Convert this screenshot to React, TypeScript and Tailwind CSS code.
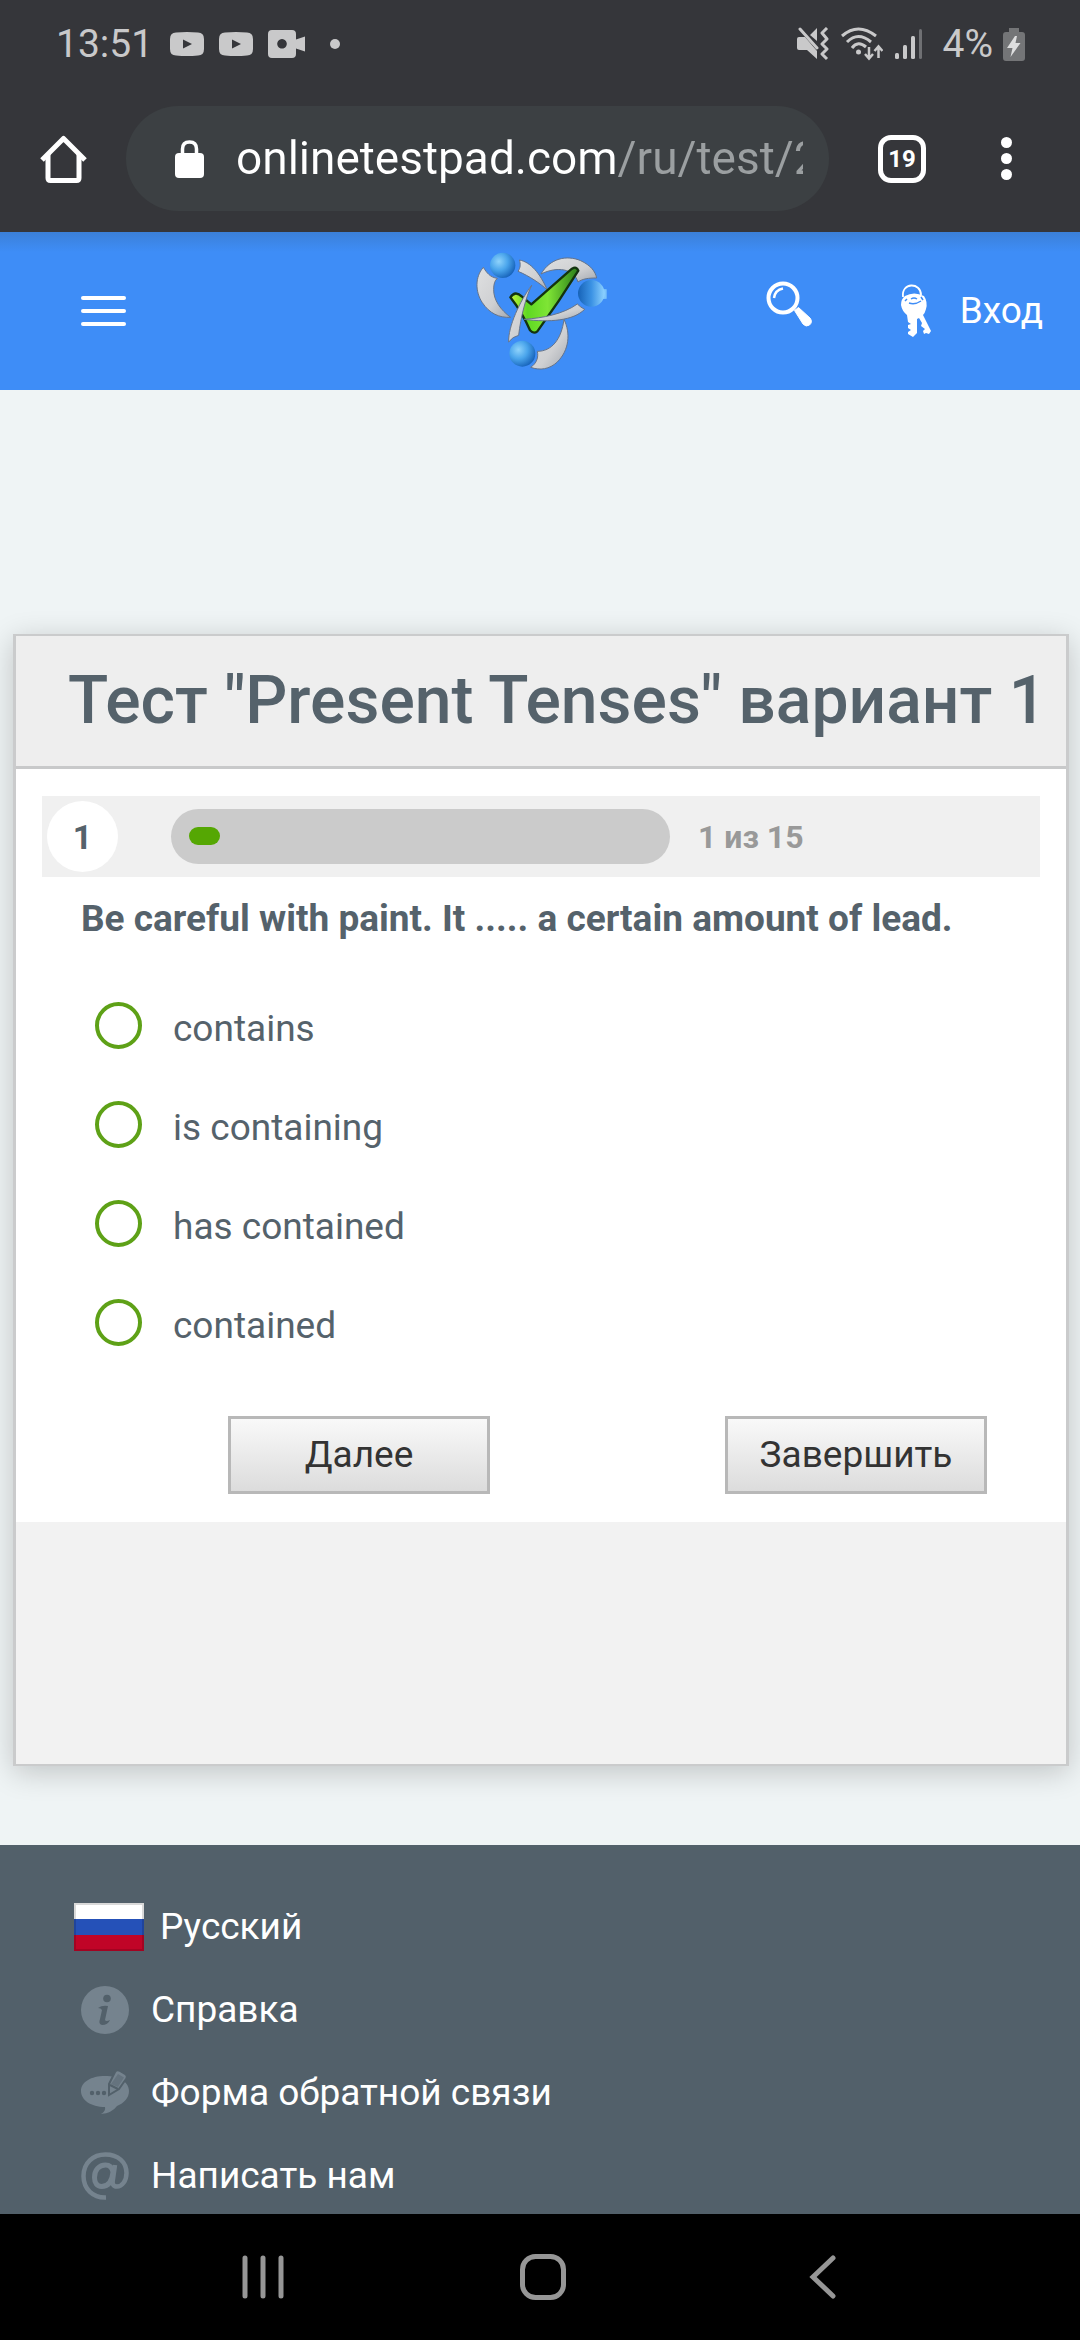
import { useState } from 'react';

const answers = ['contains', 'is containing', 'has contained', 'contained'];
const current = 1;
const total = 15;

function YoutubeIcon() {
  return (
    <svg width="34" height="24" viewBox="0 0 34 24" className="shrink-0">
      <path
        fill="currentColor"
        fillRule="evenodd"
        d="M6 0.5 Q17 -0.5 28 0.5 Q34 0.5 34 7 V17 Q34 23.500 28 23.500 Q17 24.500 6 23.500 Q0 23.500 0 17 V7 Q0 0.500 6 0.500 Z M13 7.500 V16.500 L22 12 Z"
      />
    </svg>
  );
}

function StatusBar() {
  return (
    <div className="flex h-[88px] items-center pl-14 pr-[55px] text-[#c9c9ca]">
      <span className="text-[39px] leading-[48px]">13:51</span>
      <div className="ml-[17px] flex items-center gap-[15px]">
        <YoutubeIcon />
        <YoutubeIcon />
        <svg width="38" height="28" viewBox="0 0 38 28">
          <path
            fill="currentColor"
            fillRule="evenodd"
            d="M4 0 H24 Q28 0 28 4 V9.500 L37 6.500 V21.500 L28 18.500 V24 Q28 28 24 28 H4 Q0 28 0 24 V4 Q0 0 4 0 Z M14 9 a4.800 4.800 0 1 0 0.010 0 Z"
          />
        </svg>
      </div>
      <span className="ml-6 size-[10px] rounded-full bg-[#c9c9ca]" />

      <div className="ml-auto flex items-center">
        <svg width="32" height="34" viewBox="0 0 32 34">
          <path fill="currentColor" d="M0 12 Q0 10 2 10 H8 L20 24 V32 L10 23 H2 Q0 23 0 21 Z M13 8 L20 1 V14 Z" />
          <path d="M3 2 L20 21" stroke="currentColor" strokeWidth="3" strokeLinecap="round" />
          <path
            d="M30 1 L25 6 L30 12 L25 17 L30 22 L25 27 L30 32"
            fill="none"
            stroke="currentColor"
            strokeWidth="3"
            strokeLinejoin="round"
          />
        </svg>
        <svg width="42" height="34" viewBox="0 0 42 34" className="ml-3" fill="none" stroke="currentColor">
          <g strokeWidth="3">
            <path d="M1 9 Q17 -5 35 9" />
            <path d="M6 15 Q17 4 30 15" />
            <path d="M11 21 Q17 13 25 20" />
          </g>
          <circle cx="17.500" cy="25" r="2.500" fill="currentColor" stroke="none" />
          <path d="M28 20 V31 M24 27 L28 31.500 L32 27 M37.500 31 V20 M33.500 24 L37.500 19.500 L41.500 24" strokeWidth="2.500" />
        </svg>
        <svg width="28" height="32" viewBox="0 0 28 32" className="ml-3" fill="currentColor">
          <rect x="0" y="25" width="4" height="6" rx="1.500" />
          <rect x="8" y="17" width="4" height="14" rx="1.500" />
          <rect x="16" y="8" width="4" height="23" rx="1.500" />
          <rect x="24" y="1" width="3" height="30" rx="1.500" opacity="0.400" />
        </svg>
        <span className="ml-5 text-[39px] leading-[48px]">4%</span>
        <svg width="22" height="34" viewBox="0 0 22 34" className="ml-[10px]">
          <path fill="#747577" d="M6 5 V1 H16 V5 H19 Q22 5 22 8 V31 Q22 34 19 34 H3 Q0 34 0 31 V8 Q0 5 3 5 Z" />
          <path fill="#dededf" d="M12 9 L4 21 H9.500 L7.500 30 L17.500 16 H12.500 L14 9 Z" />
        </svg>
      </div>
    </div>
  );
}

function Toolbar() {
  return (
    <div className="flex items-center pb-[21px] pl-10 pr-[68px] pt-[18px] text-white">
      <button aria-label="Home" className="shrink-0">
        <svg width="47" height="48" viewBox="0 0 47 48" fill="none" stroke="currentColor" strokeWidth="5">
          <path d="M2 25 L23.500 3.500 L45 25" strokeLinejoin="round" />
          <path d="M8 19 V43 Q8 45.500 10.500 45.500 H36.500 Q39 45.500 39 43 V19" />
        </svg>
      </button>
      <div className="ml-[39px] flex h-[105px] min-w-0 flex-1 items-center rounded-full bg-[#3c4043] pl-[49px] pr-[26px]">
        <svg width="29" height="38" viewBox="0 0 29 38" className="shrink-0">
          <rect x="0" y="13" width="29" height="25" rx="4" fill="currentColor" />
          <path d="M7.500 14 V9 Q7.500 2 14.500 2 Q21.500 2 21.500 9 V14" fill="none" stroke="currentColor" strokeWidth="3.500" />
        </svg>
        <input
          type="text"
          aria-label="Address"
          defaultValue="onlinetestpad.com/ru/test/2"
          className="ml-8 h-16 min-w-0 flex-1 bg-[linear-gradient(to_right,#ffffff_379px,#9b9fa1_379px)] bg-clip-text text-[46px] text-transparent outline-none"
        />
      </div>
      <button
        aria-label="Tabs"
        className="ml-[49px] flex size-12 shrink-0 items-center justify-center rounded-[13px] border-5 border-white text-[24px] font-bold leading-none"
      >
        19
      </button>
      <button aria-label="Menu" className="ml-[75px] flex shrink-0 flex-col gap-[5px]">
        <span className="size-[11px] rounded-full bg-white" />
        <span className="size-[11px] rounded-full bg-white" />
        <span className="size-[11px] rounded-full bg-white" />
      </button>
    </div>
  );
}

function Logo() {
  return (
    <svg width="136" height="128" viewBox="96 51 408 384">
      <defs>
        <linearGradient id="silver" x1="0" y1="0" x2="1" y2="1">
          <stop offset="0" stopColor="#dfe0e1" />
          <stop offset="0.600" stopColor="#cfd0d2" />
          <stop offset="1" stopColor="#a3a8b0" />
        </linearGradient>
        <radialGradient id="ball" cx="0.350" cy="0.350" r="0.700">
          <stop offset="0" stopColor="#8fd3fb" />
          <stop offset="0.500" stopColor="#4aa5ec" />
          <stop offset="1" stopColor="#1763ba" />
        </radialGradient>
        <linearGradient id="ballSide" x1="0" y1="0" x2="1" y2="0">
          <stop offset="0" stopColor="#1763b8" />
          <stop offset="0.500" stopColor="#3b92e4" />
          <stop offset="1" stopColor="#8ed2ff" />
        </linearGradient>
        <linearGradient id="tick" x1="0" y1="0" x2="1" y2="0">
          <stop offset="0" stopColor="#c3f53c" />
          <stop offset="0.250" stopColor="#5fd822" />
          <stop offset="0.550" stopColor="#7fe535" />
          <stop offset="1" stopColor="#2a7d1a" />
        </linearGradient>
      </defs>
      <g fill="url(#silver)" stroke="#66748a" strokeWidth="3">
        <path d="M130 112 C105 140 105 185 127 218 C148 250 178 264 212 262 C182 240 160 210 161 178 C161 162 164 152 172 145 C150 142 140 128 130 112 Z" />
        <path d="M238 90 C272 96 300 130 322 180 C300 160 268 138 234 124 C242 112 242 102 238 90 Z" />
        <path d="M303 132 C330 85 380 74 422 92 C452 106 466 124 470 144 C446 144 428 146 414 156 C402 116 352 108 303 132 Z" />
        <path d="M372 268 C392 310 388 360 352 396 C328 418 300 422 272 412 C290 400 296 382 292 364 C334 364 364 330 372 268 Z" />
      </g>
      <path
        d="M211 202 Q226 180 246 200 L274 223 L396 116 Q410 108 415 122 Q358 214 292 304 Q281 313 270 301 Q246 246 211 202 Z"
        fill="url(#tick)"
        stroke="#14330f"
        strokeWidth="7"
        strokeLinejoin="round"
      />
      <g fill="url(#silver)" stroke="#66748a" strokeWidth="3">
        <path d="M434 238 C400 272 330 278 252 268 C310 264 370 252 412 222 Q422 232 434 238 Z" />
        <path d="M275 166 C258 200 242 262 236 316 Q218 320 206 336 C204 290 240 212 275 166 Z" />
      </g>
      <circle cx="188" cy="106" r="38" fill="url(#ball)" />
      <path d="M478 176 L500 178 V206 L478 208 Z" fill="#7cc4fb" />
      <circle cx="454" cy="190" r="40" fill="url(#ballSide)" />
      <circle cx="247" cy="371" r="39" fill="url(#ball)" />
    </svg>
  );
}

function SiteHeader() {
  return (
    <header className="grid h-[158px] grid-cols-[1fr_auto_1fr] items-center bg-[#3e8df7] bg-[linear-gradient(to_bottom,#3b80d8,#3e8df7_20px)] text-white">
      <button aria-label="Меню" className="ml-[81px] flex w-[45px] flex-col gap-[9px]">
        <span className="h-1 w-full rounded-full bg-white" />
        <span className="h-1 w-full rounded-full bg-white" />
        <span className="h-1 w-full rounded-full bg-white" />
      </button>
      <a href="#" aria-label="Online Test Pad">
        <Logo />
      </a>
      <div className="flex items-center justify-end pr-[37px]">
        <button aria-label="Поиск">
          <svg width="46" height="62" viewBox="0 0 46 62" fill="none" stroke="currentColor">
            <circle cx="17" cy="18" r="14.500" strokeWidth="4" />
            <path d="M8 18 Q9 10 17 8.500" strokeWidth="2.500" />
            <path d="M28.500 30.500 L32.500 27.500 L44 38 Q47 42 43.500 45 Q40 47.500 37 44 Z" fill="currentColor" strokeWidth="1" />
          </svg>
        </button>
        <a href="#" className="ml-[89px] flex items-center text-[37px] leading-[44px]">
          <svg width="31" height="56" viewBox="0 0 31 56" className="mr-7">
            <path d="M2 14 C0 -1 20 -1 20 12" fill="none" stroke="currentColor" strokeWidth="1.800" />
            <path
              fill="currentColor"
              d="M4 13 Q13 8 23 13 Q27 19 25 26 Q24 30 22 32 L26 40 L30 48 L28 51 L25 50 L23 51 L22 48 L24 46 L20 43 L21 40 L18 35 L16 36 L16 50 L12 54 L7 51 L7 49 L10 47 L7 45 L7 42 L10 41 L7 39 L6 32 Q1 28 0 22 Q0 16 4 13 Z"
            />
            <path d="M4 18 L6 16 M10 16 Q13 14 16 16 M8 20 Q14 22 20 18 M20 14 L22 17" fill="none" stroke="#3e8df7" strokeWidth="1.500" />
          </svg>
          Вход
        </a>
      </div>
    </header>
  );
}

function Quiz() {
  const [answer, setAnswer] = useState('');

  return (
    <section className="ml-[13px] mr-[11px] border-x-3 border-y-2 border-[#cacbcc] bg-[#f2f2f2] text-[#55626b] shadow-[0_6px_28px_rgba(0,0,0,0.2)]">
      <h1 className="whitespace-nowrap border-b-3 border-[#c8c9ca] bg-[#eeeeee] py-8 pl-13 text-[66px] font-medium leading-[66px]">
        Тест "Present Tenses" вариант 1
      </h1>

      <form className="bg-white px-[26px] pb-7 pt-[27px]" onSubmit={(e) => e.preventDefault()}>
        <div className="flex items-center bg-[#f0f0f0] p-[5px]">
          <span className="flex size-[71px] shrink-0 items-center justify-center rounded-full bg-white text-[34px] font-bold leading-none">
            {current}
          </span>
          <div
            role="progressbar"
            aria-valuenow={current}
            aria-valuemax={total}
            className="ml-[53px] h-[55px] w-[499px] rounded-full bg-[#cbcbcb] px-[18px] py-[18px]"
          >
            <div className="h-[18px] rounded-full bg-[#55a703]" style={{ width: `${(current / total) * 100}%` }} />
          </div>
          <span className="ml-7 text-[32px] font-bold leading-10 text-[#999999]">
            {current} из {total}
          </span>
        </div>

        <fieldset className="mt-5">
          <legend className="pl-[39px] text-[37px] font-bold leading-[44px]">
            Be careful with paint. It ..... a certain amount of lead.
          </legend>
          <div className="mt-[61px] flex flex-col gap-[45px] pl-[53px]">
            {answers.map((text) => (
              <label key={text} className="flex gap-[31px] text-[37px] leading-[54px]">
                <input
                  type="radio"
                  name="answer"
                  value={text}
                  checked={answer === text}
                  onChange={() => setAnswer(text)}
                  className="size-[47px] shrink-0 appearance-none rounded-full border-4 border-[#5ea117] checked:bg-[#5ea117]"
                />
                {text}
              </label>
            ))}
          </div>
        </fieldset>

        <div className="mt-[63px] flex justify-between pl-[186px] pr-[53px]">
          {['Далее', 'Завершить'].map((title) => (
            <button
              key={title}
              className="h-[78px] w-[262px] border-3 border-[#b8b8b8] bg-linear-to-b from-[#f9f9f9] to-[#dcdcdc] text-[37px] leading-[44px] text-[#333333]"
            >
              {title}
            </button>
          ))}
        </div>
      </form>
      <div className="h-[242px]" />
    </section>
  );
}

function Flag() {
  return (
    <svg width="70" height="48" viewBox="0 0 70 48">
      <rect width="70" height="16" fill="#ffffff" />
      <rect y="16" width="70" height="16" fill="#2551b8" />
      <rect y="32" width="70" height="16" fill="#c00427" />
      <rect x="1" y="1" width="68" height="46" fill="none" stroke="#000000" strokeOpacity="0.150" strokeWidth="2" />
    </svg>
  );
}

function InfoIcon() {
  return (
    <svg width="48" height="48" viewBox="0 0 48 48">
      <circle cx="24" cy="24" r="24" fill="#75838e" />
      <circle cx="26" cy="12.500" r="3.800" fill="#52606a" />
      <path d="M17 22 Q21 19 27 20 L24 34 Q25 36 29 34 Q27 39 21 39 Q17 38 19 33 L21 24 Q20 22 17 22 Z" fill="#52606a" />
    </svg>
  );
}

function FeedbackIcon() {
  return (
    <svg width="48" height="48" viewBox="0 0 48 48">
      <path d="M24 7 C38 7 48 13 48 22 C48 29 43 34 36 37 Q31 44 20 45 Q25 42 24 38 C10 38 0 31 0 22 C0 13 10 7 24 7 Z" fill="#75838e" />
      <path d="M34 3 Q36 0 39 2 L44 5 Q47 7 45 10 L38 20 L28 26 L28 15 Z" fill="#75838e" stroke="#52606a" strokeWidth="2" />
      <path d="M37 5 L43 8.500 L37 18 L30 15 Z" fill="#65737e" />
      <path d="M29 16 L37 20" stroke="#52606a" strokeWidth="2" />
      <g fill="#52606a">
        <circle cx="11" cy="24" r="2.200" />
        <circle cx="17" cy="24" r="2.200" />
        <circle cx="23" cy="24" r="2.200" />
      </g>
    </svg>
  );
}

function MailIcon() {
  return (
    <svg width="48" height="48" viewBox="0 0 48 48" fill="none" stroke="#75838e">
      <path d="M25 45.500 C12 46 2.500 37 2.500 24 C2.500 11 12 2.500 24.500 2.500 C37 2.500 45.500 10 45.500 21 C45.500 29 41 34.500 36 34.500 C32 34.500 31 32 32 27 L34 13" strokeWidth="4.500" />
      <path d="M32 20 C31 15 28 13 24.500 13 C18 13 13.500 18 13.500 25.500 C13.500 31 16 34.500 20.500 34.500 C27 34.500 31 30 32 20 Z" strokeWidth="5" />
    </svg>
  );
}

const links = [
  { title: 'Справка', icon: <InfoIcon /> },
  { title: 'Форма обратной связи', icon: <FeedbackIcon /> },
  { title: 'Написать нам', icon: <MailIcon /> },
];

export default function App() {
  return (
    <div className="flex min-h-screen flex-col bg-[#eff4f5] font-['Roboto',sans-serif]">
      <div className="bg-[#35363a]">
        <StatusBar />
        <Toolbar />
      </div>

      <SiteHeader />

      <main className="pb-[79px] pt-[244px]">
        <Quiz />
      </main>

      <footer className="flex flex-1 flex-col gap-[35px] bg-[#52606a] pt-[58px] text-[37px] leading-[48px] text-white">
        <a href="#" className="flex items-center gap-4 pl-[74px]">
          <Flag />
          Русский
        </a>
        {links.map((link) => (
          <a key={link.title} href="#" className="flex items-center gap-[22px] pl-[81px]">
            {link.icon}
            {link.title}
          </a>
        ))}
      </footer>

      {/* System navigation */}
      <nav className="grid h-[126px] grid-cols-3 place-items-center bg-black pl-[123px] pr-[117px] text-[#969696]">
        <button aria-label="Recents">
          <svg width="42" height="44" viewBox="0 0 42 44" stroke="currentColor" strokeWidth="5" strokeLinecap="round">
            <path d="M3 3 V41 M21 3 V41 M39 3 V41" />
          </svg>
        </button>
        <button aria-label="Home">
          <svg width="46" height="46" viewBox="0 0 46 46" fill="none" stroke="currentColor" strokeWidth="5">
            <rect x="2.500" y="2.500" width="41" height="41" rx="13" />
          </svg>
        </button>
        <button aria-label="Back">
          <svg width="28" height="44" viewBox="0 0 28 44" fill="none" stroke="currentColor" strokeWidth="5" strokeLinecap="round">
            <path d="M24 3 L4 22 L24 41" />
          </svg>
        </button>
      </nav>
    </div>
  );
}
